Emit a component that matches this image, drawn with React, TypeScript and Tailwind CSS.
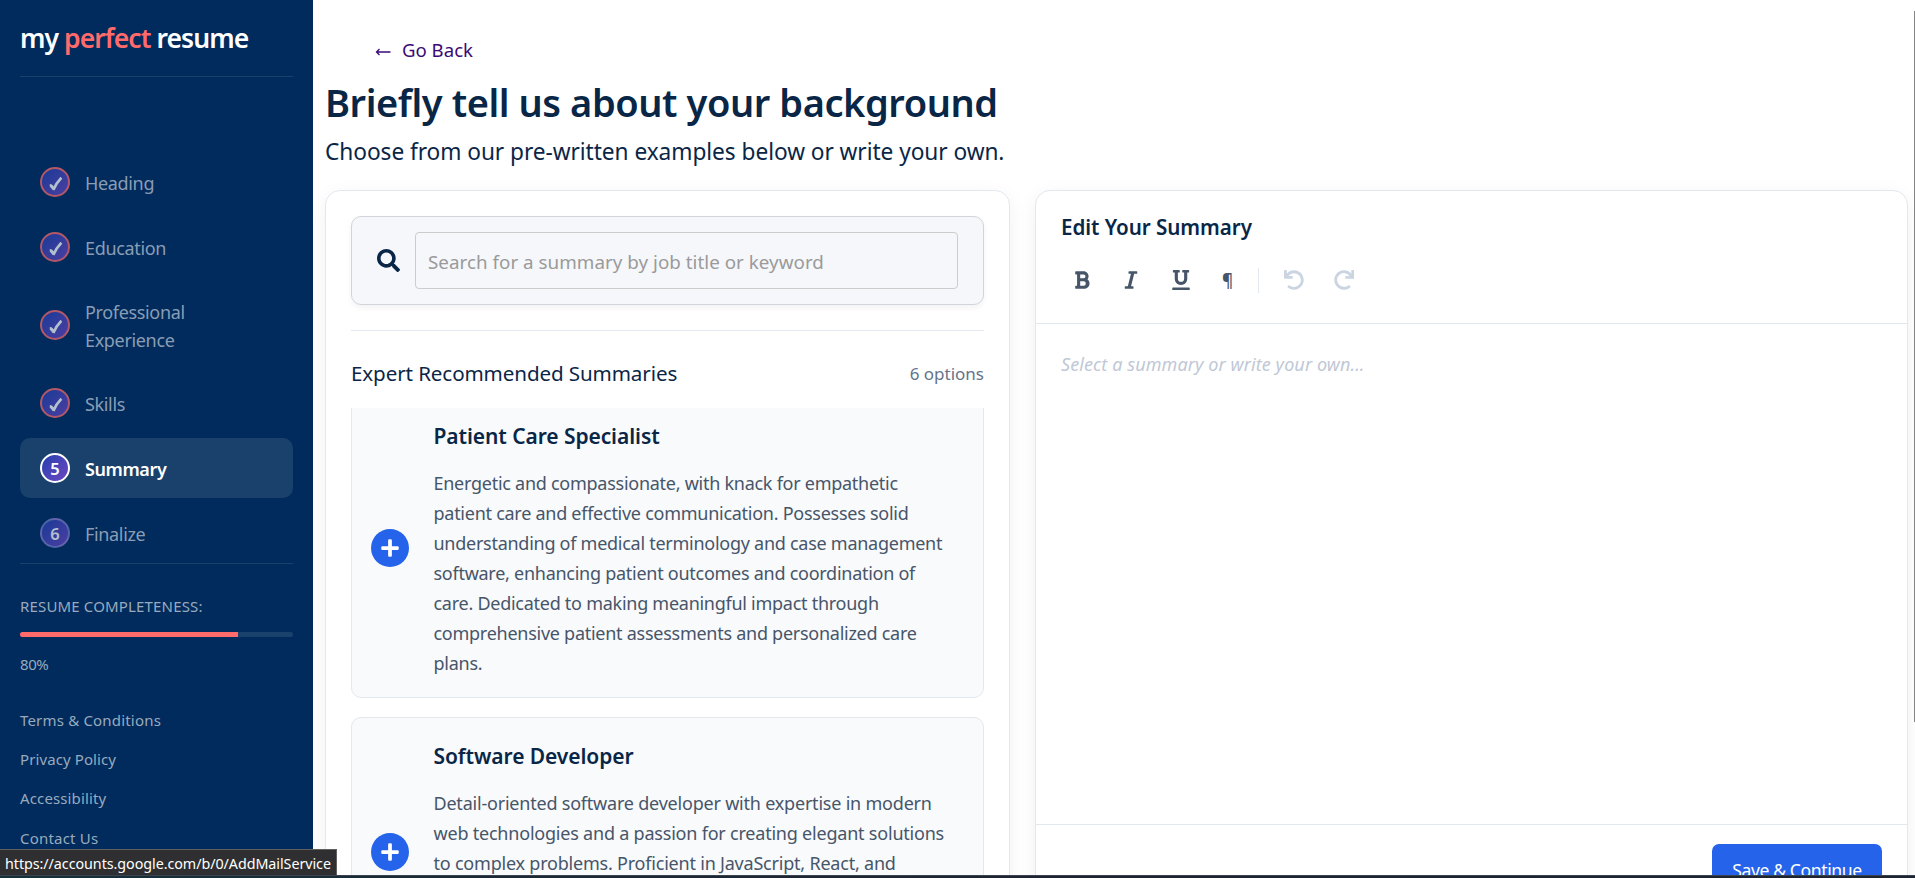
import type { ReactNode } from "react";
import { FaBold, FaItalic, FaUnderline, FaSearch, FaPlus, FaUndo, FaRedo } from "react-icons/fa";

type Step = { label: string; number: number; state: "done" | "active" | "todo" };

const steps: Step[] = [
  { label: "Heading", number: 1, state: "done" },
  { label: "Education", number: 2, state: "done" },
  { label: "Professional Experience", number: 3, state: "done" },
  { label: "Skills", number: 4, state: "done" },
  { label: "Summary", number: 5, state: "active" },
  { label: "Finalize", number: 6, state: "todo" },
];

const links = [
  { label: "Terms & Conditions", tracking: "tracking-[0.185px]" },
  { label: "Privacy Policy", tracking: "tracking-[0.1px]" },
  { label: "Accessibility", tracking: "tracking-[0.13px]" },
  { label: "Contact Us", tracking: "tracking-[0.2px]" },
];

const summaries = [
  {
    title: "Patient Care Specialist",
    text: "Energetic and compassionate, with knack for empathetic patient care and effective communication. Possesses solid understanding of medical terminology and case management software, enhancing patient outcomes and coordination of care. Dedicated to making meaningful impact through comprehensive patient assessments and personalized care plans.",
    height: "h-[301px]",
    textTop: "pt-[25px]",
    tracking: "tracking-[-0.265px]",
  },
  {
    title: "Software Developer",
    text: "Detail-oriented software developer with expertise in modern web technologies and a passion for creating elegant solutions to complex problems. Proficient in JavaScript, React, and",
    height: "h-[270px]",
    textTop: "pt-[25px]",
    tracking: "tracking-[-0.21px]",
  },
];

const circleBorder = {
  done: "border-[#ff6b6b] opacity-70",
  active: "border-white",
  todo: "border-white/30 opacity-70",
};

function StepItem({ step }: { step: Step }) {
  const active = step.state === "active";
  const tall = step.label.includes(" ");
  return (
    <li
      className={`flex shrink-0 items-center gap-[15px] rounded-[10px] px-5 ${tall ? "h-[86px]" : "h-[60px]"} ${active ? "bg-white/10" : ""}`}
    >
      <span
        className={`flex size-[30px] shrink-0 items-center justify-center rounded-full border-2 bg-linear-135 from-[#1e40af] to-[#6b46c1] text-[16.5px] leading-none font-semibold text-white ${circleBorder[step.state]}`}
      >
        {step.state === "done" ? (
          <svg viewBox="0 0 14 14" className="mt-[3px] ml-px size-[14px]" fill="none" stroke="white">
            <path d="M.8 8.6C2.4 8.6 3.6 9.9 4.6 12.2" strokeWidth="3" />
            <path d="M4.3 13C6.2 8.6 8.6 4.4 12.4.7" strokeWidth="2.6" />
          </svg>
        ) : (
          <span className="mt-0.5">{step.number}</span>
        )}
      </span>
      <span
        className={`w-[120px] pt-0.5 text-[18px] leading-[28.5px] ${active ? "font-semibold tracking-[-0.4px] text-white" : "tracking-[-0.34px] text-[#8a9db5]"}`}
      >
        {step.label}
      </span>
    </li>
  );
}

function Sidebar() {
  return (
    <aside className="relative z-10 flex w-[313px] shrink-0 flex-col bg-[#002b5c] px-5">
      <div className="h-[77px] shrink-0 border-b border-white/10 pt-5 text-[26.5px] leading-[36px] font-semibold tracking-[-0.93px] whitespace-nowrap text-white">
        my <span className="text-[#ff6b6b]">perfect</span> resume
      </div>
      <ul className="mt-[75px] flex flex-col gap-[5px]">
        {steps.map((s) => (
          <StepItem key={s.number} step={s} />
        ))}
      </ul>
      <div className="shrink-0 border-t border-white/10 pt-8 text-[15px] leading-5 text-[#99aabe]">
        <p className="tracking-[0.16px] whitespace-nowrap">RESUME COMPLETENESS:</p>
        <div className="mt-4 h-[5px] overflow-hidden rounded-full bg-white/10">
          <div className="h-full w-4/5 bg-[#ff6b6b]" />
        </div>
        <p className="mt-[17px] tracking-[-0.4px]">80%</p>
        <nav className="mt-[35.5px] flex flex-col gap-[19.4px]">
          {links.map((l) => (
            <a key={l.label} className={`whitespace-nowrap ${l.tracking}`}>
              {l.label}
            </a>
          ))}
        </nav>
      </div>
    </aside>
  );
}

function SummaryItem({ title, text, height, textTop, tracking }: (typeof summaries)[number]) {
  return (
    <article
      className={`flex shrink-0 items-center gap-[24.5px] rounded-[10px] border border-[#e2e8f0] bg-[#f8fafc] pl-[19px] ${height}`}
    >
      <button className="flex size-[38px] shrink-0 items-center justify-center rounded-full bg-[#2563eb] text-white">
        <FaPlus size={20} />
      </button>
      <div className={`flex h-full w-[520px] flex-col ${textTop}`}>
        <h3 className="text-[21px] leading-[27px] font-semibold tracking-[-0.08px]">{title}</h3>
        <p className={`mt-[18px] text-[18px] leading-[30px] text-[#475569] ${tracking}`}>{text}</p>
      </div>
    </article>
  );
}

function SearchPanel() {
  return (
    <section className="flex h-[900px] w-[685px] shrink-0 flex-col rounded-[15px] border border-[#e2e8f0] bg-white p-[25px] shadow-[0_5px_19px_rgba(0,0,0,0.06)]">
      <div className="flex h-[89px] shrink-0 items-center gap-[14px] rounded-[10px] border border-[#d1d5db] bg-[#f5f7fb] px-[25px] shadow-[0_3px_6px_rgba(0,0,0,0.05)]">
        <FaSearch size={23} className="mr-px shrink-0" />
        <div className="flex h-[57px] flex-1 items-center rounded-[4px] border border-[#cccccc] px-3 pt-1 text-[18.8px] tracking-[0.03px] text-[#9a9a9a]">
          Search for a summary by job title or keyword
        </div>
      </div>
      <div className="mt-[25px] flex h-[78px] shrink-0 items-center justify-between border-t border-[#e2e8f0] pt-2">
        <h2 className="text-[20.6px] tracking-[-0.11px]">Expert Recommended Summaries</h2>
        <span className="text-[17px] text-[#64748b]">6 options</span>
      </div>
      <div className="flex min-h-0 flex-1 flex-col gap-[19px] overflow-hidden">
        <div className="-mt-[11px] flex flex-col gap-[19px]">
          {summaries.map((s) => (
            <SummaryItem key={s.title} {...s} />
          ))}
        </div>
      </div>
    </section>
  );
}

function ToolButton({ className, children }: { className: string; children: ReactNode }) {
  return <button className={`flex h-10 shrink-0 items-center justify-center ${className}`}>{children}</button>;
}

function EditorPanel() {
  return (
    <section className="flex h-[730px] w-[873px] shrink-0 flex-col rounded-[15px] border border-[#e2e8f0] bg-white shadow-[0_5px_19px_rgba(0,0,0,0.06)]">
      <div className="h-[133px] shrink-0 border-b border-[#e2e8f0] px-[25px] pt-[21px]">
        <h2 className="text-[20.6px] leading-[30px] font-semibold tracking-[-0.05px]">Edit Your Summary</h2>
        <div className="mt-[18px] flex items-center text-[#475569]">
          <ToolButton className="w-[41px]">
            <FaBold size={20} />
          </ToolButton>
          <ToolButton className="ml-2.5 w-[38px]">
            <FaItalic size={20} />
          </ToolButton>
          <ToolButton className="ml-2.5 w-[42px]">
            <FaUnderline size={20} />
          </ToolButton>
          <ToolButton className="ml-2.5 w-[31px]">
            <span className="text-[17px] leading-none font-semibold">¶</span>
          </ToolButton>
          <span className="ml-[15px] h-[25px] w-px bg-[#e2e8f0]" />
          <ToolButton className="ml-3 w-[45px] text-[#cbd5e1]">
            <FaUndo size={20} />
          </ToolButton>
          <ToolButton className="ml-[5px] w-[45px] text-[#cbd5e1]">
            <FaRedo size={20} />
          </ToolButton>
        </div>
      </div>
      <div className="h-[500px] shrink-0 px-[25px] pt-[26px] text-[18px] leading-[28px] tracking-[0.1px] text-[#bfc8d6] italic">
        Select a summary or write your own...
      </div>
      <div className="flex flex-1 items-start justify-end border-t border-[#e2e8f0] px-[25px] pt-[19px]">
        <button className="h-[50px] w-[170px] rounded-[7px] bg-[#2563eb] pt-0.5 text-[17.6px] tracking-[-0.4px] whitespace-nowrap text-white">
          Save &amp; Continue
        </button>
      </div>
    </section>
  );
}

export default function App() {
  return (
    <div className="relative flex h-[878px] w-[1915px] flex-col overflow-hidden bg-white font-['Noto_Sans','Liberation_Sans',sans-serif] text-[#0a2647]">
      <div className="flex h-[875px] shrink-0 overflow-hidden">
        <Sidebar />
        <main className="flex min-w-0 flex-1 flex-col pl-3">
          <a className="ml-[49px] flex h-[75px] shrink-0 items-center gap-[11px] pt-[25px] text-[18.6px] leading-none text-[#3b0a75]">
            <svg viewBox="0 0 16 12" className="mt-1 ml-px h-3 w-4" fill="none" stroke="currentColor" strokeWidth="1.3">
              <path d="M15.5 6H1.5M4.5 3L1.5 6L4.5 9" />
            </svg>
            Go Back
          </a>
          <h1 className="text-[38px] leading-[54px] font-semibold tracking-[-0.43px] whitespace-nowrap">
            Briefly tell us about your background
          </h1>
          <p className="mt-1.5 h-[55px] shrink-0 text-[22.7px] leading-[34px] tracking-[-0.06px] whitespace-nowrap">
            Choose from our pre-written examples below or write your own.
          </p>
          <div className="flex items-start gap-[25px]">
            <SearchPanel />
            <EditorPanel />
          </div>
        </main>
      </div>
      <div className="h-[3px] shrink-0 border-t border-[#3a4450] bg-linear-to-r from-[#16303a] via-[#1f2433] to-[#1c2530]" />
      <div className="absolute top-[11px] right-0 h-[711px] w-px bg-[#858585]" />
      <div className="absolute top-[849px] left-0 z-20 h-[26px] w-[337px] border-t border-r border-[#606060] bg-[#2f2f31] pl-[5px] text-[14.3px] leading-[27px] tracking-[-0.05px] whitespace-nowrap text-white">
        https://accounts.google.com/b/0/AddMailService
      </div>
    </div>
  );
}
